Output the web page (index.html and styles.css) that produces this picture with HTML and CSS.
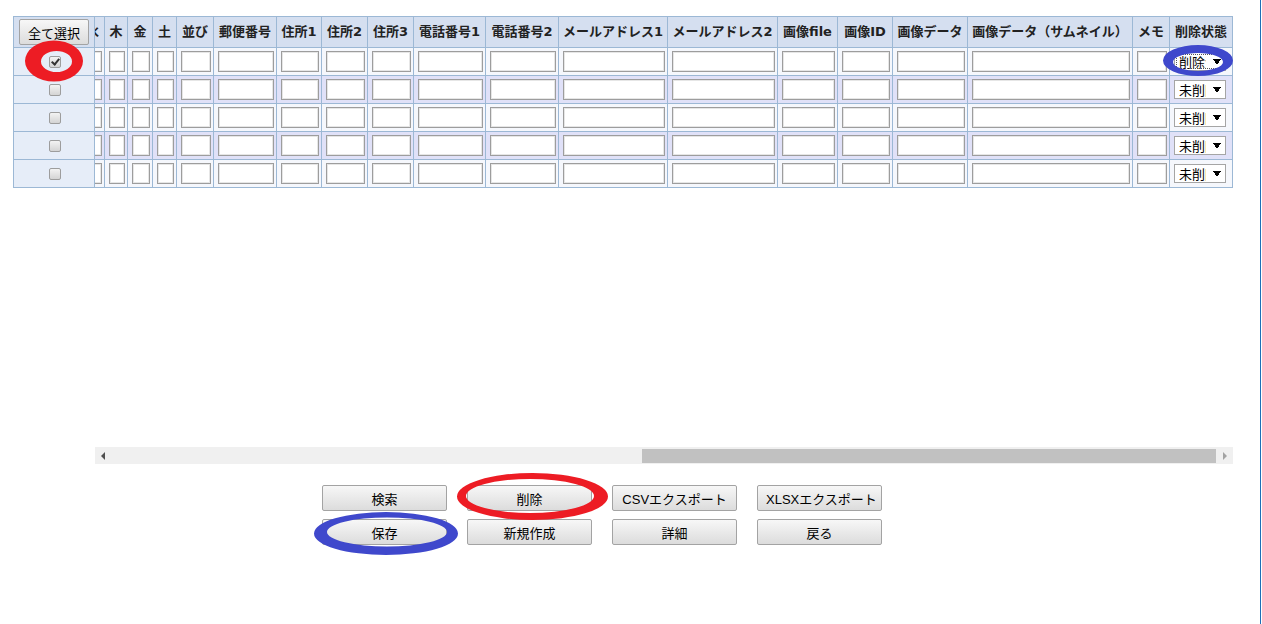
FILE: index.html
```html
<!DOCTYPE html>
<html lang="ja">
<head>
<meta charset="utf-8">
<title>一覧</title>
<link rel="stylesheet" href="styles.css">
</head>
<body>
<div class="page">
  <div class="grid-area">
    <table class="fixed-col">
      <thead>
        <tr><th><div class="head-cell"><button class="btn btn-all" type="button">全て選択</button></div></th></tr>
      </thead>
      <tbody>
        <tr><td><div class="chk-cell"><input class="chk" type="checkbox" checked></div></td></tr>
        <tr class="even"><td><div class="chk-cell"><input class="chk" type="checkbox"></div></td></tr>
        <tr><td><div class="chk-cell"><input class="chk" type="checkbox"></div></td></tr>
        <tr class="even"><td><div class="chk-cell"><input class="chk" type="checkbox"></div></td></tr>
        <tr><td><div class="chk-cell"><input class="chk" type="checkbox"></div></td></tr>
      </tbody>
    </table>
    <div class="table-wrap">
      <div class="scroller">
        <table class="data">
          <colgroup>
            <col class="w65"><col class="w110"><col class="w110"><col class="w45"><col class="w100"><col class="w45"><col class="w170"><col class="w130"><col class="w110"><col class="w81">
            <col class="w24"><col class="w24"><col class="w24"><col class="w24">
            <col class="w23"><col class="w25"><col class="w24"><col class="w37"><col class="w63"><col class="w45"><col class="w46"><col class="w46"><col class="w72"><col class="w73"><col class="w109"><col class="w110"><col class="w60"><col class="w55"><col class="w75"><col class="w165"><col class="w37"><col class="w63">
          </colgroup>
          <thead>
            <tr>
              <th>ID</th><th>氏名</th><th>フリガナ</th><th>性別</th><th>生年月日</th><th>年齢</th><th>会社名</th><th>部署</th><th>役職</th><th>区分</th>
              <th>日</th><th>月</th><th>火</th><th>水</th><th>木</th><th>金</th><th>土</th><th>並び</th><th>郵便番号</th><th>住所1</th><th>住所2</th><th>住所3</th><th>電話番号1</th><th>電話番号2</th><th>メールアドレス1</th><th>メールアドレス2</th><th>画像file</th><th>画像ID</th><th>画像データ</th><th>画像データ（サムネイル）</th><th>メモ</th><th>削除状態</th>
            </tr>
          </thead>
          <tbody>
            <tr>
              <td><input class="txt" type="text"></td><td><input class="txt" type="text"></td><td><input class="txt" type="text"></td><td><input class="txt" type="text"></td><td><input class="txt" type="text"></td><td><input class="txt" type="text"></td><td><input class="txt" type="text"></td><td><input class="txt" type="text"></td><td><input class="txt" type="text"></td><td><input class="txt" type="text"></td>
              <td><input class="txt" type="text"></td><td><input class="txt" type="text"></td><td><input class="txt" type="text"></td><td><input class="txt" type="text"></td><td><input class="txt" type="text"></td><td><input class="txt" type="text"></td><td><input class="txt" type="text"></td><td><input class="txt" type="text"></td><td><input class="txt" type="text"></td><td><input class="txt" type="text"></td>
              <td><input class="txt" type="text"></td><td><input class="txt" type="text"></td><td><input class="txt" type="text"></td><td><input class="txt" type="text"></td><td><input class="txt" type="text"></td><td><input class="txt" type="text"></td><td><input class="txt" type="text"></td><td><input class="txt" type="text"></td><td><input class="txt" type="text"></td><td><input class="txt" type="text"></td>
              <td><input class="txt" type="text"></td>
              <td class="sel-cell"><select class="sel sel-focus"><option>未削除</option><option selected>削除済</option></select></td>
            </tr>
            <tr class="even">
              <td><input class="txt" type="text"></td><td><input class="txt" type="text"></td><td><input class="txt" type="text"></td><td><input class="txt" type="text"></td><td><input class="txt" type="text"></td><td><input class="txt" type="text"></td><td><input class="txt" type="text"></td><td><input class="txt" type="text"></td><td><input class="txt" type="text"></td><td><input class="txt" type="text"></td>
              <td><input class="txt" type="text"></td><td><input class="txt" type="text"></td><td><input class="txt" type="text"></td><td><input class="txt" type="text"></td><td><input class="txt" type="text"></td><td><input class="txt" type="text"></td><td><input class="txt" type="text"></td><td><input class="txt" type="text"></td><td><input class="txt" type="text"></td><td><input class="txt" type="text"></td>
              <td><input class="txt" type="text"></td><td><input class="txt" type="text"></td><td><input class="txt" type="text"></td><td><input class="txt" type="text"></td><td><input class="txt" type="text"></td><td><input class="txt" type="text"></td><td><input class="txt" type="text"></td><td><input class="txt" type="text"></td><td><input class="txt" type="text"></td><td><input class="txt" type="text"></td>
              <td><input class="txt" type="text"></td>
              <td class="sel-cell"><select class="sel"><option selected>未削除</option><option>削除済</option></select></td>
            </tr>
            <tr>
              <td><input class="txt" type="text"></td><td><input class="txt" type="text"></td><td><input class="txt" type="text"></td><td><input class="txt" type="text"></td><td><input class="txt" type="text"></td><td><input class="txt" type="text"></td><td><input class="txt" type="text"></td><td><input class="txt" type="text"></td><td><input class="txt" type="text"></td><td><input class="txt" type="text"></td>
              <td><input class="txt" type="text"></td><td><input class="txt" type="text"></td><td><input class="txt" type="text"></td><td><input class="txt" type="text"></td><td><input class="txt" type="text"></td><td><input class="txt" type="text"></td><td><input class="txt" type="text"></td><td><input class="txt" type="text"></td><td><input class="txt" type="text"></td><td><input class="txt" type="text"></td>
              <td><input class="txt" type="text"></td><td><input class="txt" type="text"></td><td><input class="txt" type="text"></td><td><input class="txt" type="text"></td><td><input class="txt" type="text"></td><td><input class="txt" type="text"></td><td><input class="txt" type="text"></td><td><input class="txt" type="text"></td><td><input class="txt" type="text"></td><td><input class="txt" type="text"></td>
              <td><input class="txt" type="text"></td>
              <td class="sel-cell"><select class="sel"><option selected>未削除</option><option>削除済</option></select></td>
            </tr>
            <tr class="even">
              <td><input class="txt" type="text"></td><td><input class="txt" type="text"></td><td><input class="txt" type="text"></td><td><input class="txt" type="text"></td><td><input class="txt" type="text"></td><td><input class="txt" type="text"></td><td><input class="txt" type="text"></td><td><input class="txt" type="text"></td><td><input class="txt" type="text"></td><td><input class="txt" type="text"></td>
              <td><input class="txt" type="text"></td><td><input class="txt" type="text"></td><td><input class="txt" type="text"></td><td><input class="txt" type="text"></td><td><input class="txt" type="text"></td><td><input class="txt" type="text"></td><td><input class="txt" type="text"></td><td><input class="txt" type="text"></td><td><input class="txt" type="text"></td><td><input class="txt" type="text"></td>
              <td><input class="txt" type="text"></td><td><input class="txt" type="text"></td><td><input class="txt" type="text"></td><td><input class="txt" type="text"></td><td><input class="txt" type="text"></td><td><input class="txt" type="text"></td><td><input class="txt" type="text"></td><td><input class="txt" type="text"></td><td><input class="txt" type="text"></td><td><input class="txt" type="text"></td>
              <td><input class="txt" type="text"></td>
              <td class="sel-cell"><select class="sel"><option selected>未削除</option><option>削除済</option></select></td>
            </tr>
            <tr>
              <td><input class="txt" type="text"></td><td><input class="txt" type="text"></td><td><input class="txt" type="text"></td><td><input class="txt" type="text"></td><td><input class="txt" type="text"></td><td><input class="txt" type="text"></td><td><input class="txt" type="text"></td><td><input class="txt" type="text"></td><td><input class="txt" type="text"></td><td><input class="txt" type="text"></td>
              <td><input class="txt" type="text"></td><td><input class="txt" type="text"></td><td><input class="txt" type="text"></td><td><input class="txt" type="text"></td><td><input class="txt" type="text"></td><td><input class="txt" type="text"></td><td><input class="txt" type="text"></td><td><input class="txt" type="text"></td><td><input class="txt" type="text"></td><td><input class="txt" type="text"></td>
              <td><input class="txt" type="text"></td><td><input class="txt" type="text"></td><td><input class="txt" type="text"></td><td><input class="txt" type="text"></td><td><input class="txt" type="text"></td><td><input class="txt" type="text"></td><td><input class="txt" type="text"></td><td><input class="txt" type="text"></td><td><input class="txt" type="text"></td><td><input class="txt" type="text"></td>
              <td><input class="txt" type="text"></td>
              <td class="sel-cell"><select class="sel"><option selected>未削除</option><option>削除済</option></select></td>
            </tr>
          </tbody>
        </table>
      </div>
      <div class="hscroll" aria-hidden="true">
        <div class="hs-btn"><span class="arrow-left"></span></div>
        <div class="hs-track"><div class="hs-thumb"></div></div>
        <div class="hs-btn"><span class="arrow-right"></span></div>
      </div>
    </div>
  </div>

  <div class="actions">
    <button class="btn" type="button">検索</button>
    <button class="btn" type="button">削除</button>
    <button class="btn" type="button">CSVエクスポート</button>
    <button class="btn btn-left" type="button">XLSXエクスポート</button>
    <button class="btn" type="button">保存</button>
    <button class="btn" type="button">新規作成</button>
    <button class="btn" type="button">詳細</button>
    <button class="btn" type="button">戻る</button>
  </div>

  <svg class="marks" width="1262" height="624" viewBox="0 0 1262 624" aria-hidden="true">
    <path class="mark-red" fill-rule="evenodd" d="M25,61 a29,20.5 0 1,0 58,0 a29,20.5 0 1,0 -58,0 Z M41,61.5 a15.5,10.5 0 1,0 31,0 a15.5,10.5 0 1,0 -31,0 Z"/>
    <path class="mark-blue" fill-rule="evenodd" d="M1163,60.5 a35,15.5 0 1,0 70,0 a35,15.5 0 1,0 -70,0 Z M1173,62 a25,9 0 1,0 50,0 a25,9 0 1,0 -50,0 Z"/>
    <path class="mark-red" fill-rule="evenodd" d="M457,496.5 a75.5,23.5 0 1,0 151,0 a75.5,23.5 0 1,0 -151,0 Z M466,496 a64,17 0 1,0 128,0 a64,17 0 1,0 -128,0 Z"/>
    <path class="mark-blue" fill-rule="evenodd" d="M314,533.5 a72,21.5 0 1,0 144,0 a72,21.5 0 1,0 -144,0 Z M327,532 a60,14.5 0 1,0 120,0 a60,14.5 0 1,0 -120,0 Z"/>
  </svg>
</div>
</body>
</html>
```
FILE: styles.css
```css
html, body {
  margin: 0;
  padding: 0;
  background: #ffffff;
}

body {
  font-family: "Liberation Sans", "Noto Sans CJK JP", sans-serif;
  font-size: 13px;
  color: #000;
}

.page {
  position: relative;
  width: 1261px;
  height: 624px;
  box-sizing: border-box;
  border-right: 1px solid #1e6fb6;
  overflow: hidden;
}

.grid-area {
  display: flex;
  align-items: flex-start;
  padding: 16px 0 0 13px;
}

/* ---------- left fixed column ---------- */
.fixed-col {
  width: 82px;
  border-collapse: separate;
  border-spacing: 0;
  table-layout: fixed;
  border-top: 1px solid #9cb8d5;
  border-left: 1px solid #9cb8d5;
  flex: none;
}

.fixed-col th,
.fixed-col td {
  padding: 0;
  border-right: 1px solid #9cb8d5;
  border-bottom: 1px solid #9cb8d5;
}

.fixed-col th {
  background: #d5dff0;
}

.fixed-col td {
  background: #e6edf8;
  padding: 3px 0;
}

.head-cell {
  height: 30px;
  display: flex;
  align-items: center;
  justify-content: center;
}

.chk-cell {
  height: 21px;
  display: flex;
  align-items: center;
  justify-content: center;
}

.chk {
  appearance: none;
  -webkit-appearance: none;
  position: relative;
  display: block;
  width: 12px;
  height: 12px;
  margin: 0 0 0 1px;
  box-sizing: border-box;
  border: 1px solid #9d9d9d;
  border-radius: 2px;
  background: linear-gradient(#f3f3f3, #d4d4d4);
}

.chk:checked::after {
  content: "";
  position: absolute;
  left: 3px;
  top: 0px;
  width: 3px;
  height: 6px;
  border: solid #333;
  border-width: 0 2px 2px 0;
  transform: rotate(40deg);
}

/* ---------- scrolling data table ---------- */
.table-wrap {
  display: flex;
  flex-direction: column;
  width: 1138px;
  flex: none;
}

.scroller {
  height: 431px;
  overflow: hidden;
  direction: rtl;
}

.hscroll {
  display: flex;
  height: 17px;
  background: #f0f0f0;
}

.hs-btn {
  width: 17px;
  flex: none;
  display: flex;
  align-items: center;
  justify-content: center;
}

.arrow-left {
  width: 0;
  height: 0;
  border-top: 4px solid transparent;
  border-bottom: 4px solid transparent;
  border-right: 4px solid #505050;
  margin-right: 1px;
}

.arrow-right {
  width: 0;
  height: 0;
  border-top: 4px solid transparent;
  border-bottom: 4px solid transparent;
  border-left: 4px solid #a3a3a3;
  margin-left: 1px;
}

.hs-track {
  flex: 1;
  display: flex;
  justify-content: flex-end;
  padding: 2px 0 1px;
}

.hs-thumb {
  width: 574px;
  background: #c1c1c1;
}

.data {
  direction: ltr;
  width: 2191px;
  table-layout: fixed;
  border-collapse: separate;
  border-spacing: 0;
  border-top: 1px solid #9cb8d5;
  border-left: 1px solid #9cb8d5;
}

.w23 { width: 23px; }
.w24 { width: 24px; }
.w25 { width: 25px; }
.w37 { width: 37px; }
.w45 { width: 45px; }
.w46 { width: 46px; }
.w55 { width: 55px; }
.w60 { width: 60px; }
.w63 { width: 63px; }
.w65 { width: 65px; }
.w72 { width: 72px; }
.w73 { width: 73px; }
.w75 { width: 75px; }
.w81 { width: 81px; }
.w100 { width: 100px; }
.w109 { width: 109px; }
.w110 { width: 110px; }
.w130 { width: 130px; }
.w165 { width: 165px; }
.w170 { width: 170px; }

.data th,
.data td {
  border-right: 1px solid #9cb8d5;
  border-bottom: 1px solid #9cb8d5;
}

.data th {
  padding: 0;
  height: 30px;
  line-height: 30px;
  background: #d5dff0;
  font-family: "DejaVu Sans", "Noto Sans CJK JP", sans-serif;
  font-weight: bold;
  font-size: 13px;
  color: #222;
  text-align: center;
  white-space: nowrap;
  overflow: hidden;
}

.data td {
  padding: 3px 2px 3px 4px;
  background: #f5f7fc;
}

.data tr.even td {
  background: #e0e1f8;
}

.txt {
  display: block;
  width: 100%;
  height: 21px;
  box-sizing: border-box;
  margin: 0;
  padding: 0 2px;
  border: 1px solid #9d9d9d;
  box-shadow: inset 0 0 0 1px #e6e6e6;
  background: #ffffff;
  font: 13px "Liberation Sans", "Noto Sans CJK JP", sans-serif;
}

.data td.sel-cell {
  padding: 4px 5px 4px 4px;
}

.sel {
  appearance: none;
  -webkit-appearance: none;
  display: block;
  width: 52px;
  height: 19px;
  margin: 0;
  padding: 0 19px 0 4px;
  box-sizing: border-box;
  border: 1px solid #a5a5a5;
  border-radius: 0;
  font: 13px "Noto Sans CJK JP", sans-serif;
  line-height: 17px;
  color: #000;
  background:
    linear-gradient(to top right, transparent 50%, #000 50%) 38px 6px / 4px 6px no-repeat,
    linear-gradient(to top left, transparent 50%, #000 50%) 42px 6px / 4px 6px no-repeat,
    #ffffff;
}

.sel-focus {
  outline: 1px dotted #555;
  outline-offset: -3px;
}

/* ---------- buttons ---------- */
.btn {
  display: inline-flex;
  align-items: center;
  justify-content: center;
  height: 26px;
  padding: 0;
  margin: 0;
  box-sizing: border-box;
  border: 1px solid #a3a3a3;
  border-radius: 2px;
  background: linear-gradient(#f7f7f7, #dcdcdc);
  font: 13px "Liberation Sans", "Noto Sans CJK JP", sans-serif;
  color: #000;
  white-space: nowrap;
  overflow: hidden;
}

.btn-all {
  width: 70px;
}

.actions {
  display: grid;
  grid-template-columns: repeat(4, 125px);
  column-gap: 20px;
  row-gap: 8px;
  margin: 21px 0 0 322px;
}

.actions .btn {
  width: 125px;
}

.actions .btn-left {
  justify-content: flex-start;
  padding-left: 8px;
}

/* ---------- annotation overlay ---------- */
.marks {
  position: absolute;
  left: 0;
  top: 0;
  pointer-events: none;
}

.mark-red { fill: #ed1c24; }
.mark-blue { fill: #3f48cc; }
```
